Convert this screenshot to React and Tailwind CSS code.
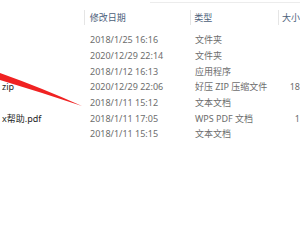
import React from 'react';

const rows = [
  { name: '', date: '2018/1/25 16:16', type: '文件夹', size: '' },
  { name: '', date: '2020/12/29 22:14', type: '文件夹', size: '' },
  { name: '', date: '2018/1/12 16:13', type: '应用程序', size: '' },
  { name: 'zip', date: '2020/12/29 22:06', type: '好压 ZIP 压缩文件', size: '18' },
  { name: '', date: '2018/1/11 15:12', type: '文本文档', size: '' },
  { name: 'x帮助.pdf', date: '2018/1/11 17:05', type: 'WPS PDF 文档', size: '1' },
  { name: '', date: '2018/1/11 15:15', type: '文本文档', size: '' },
];

function Sep() {
  return <div className="w-px self-stretch my-[7px] bg-[#e5e5e5]" />;
}

export default function App() {
  return (
    <div
      className="relative w-[300px] h-[240px] overflow-hidden bg-white text-[9px] leading-none"
      style={{ fontFamily: '"Noto Sans", "Noto Sans CJK SC", sans-serif' }}
    >
      <div className="h-px mt-[2px] ml-[150px] bg-[#ececec]" />

      {/* header */}
      <div className="flex h-[29px] text-[#4c607a]">
        <div className="w-[84px] shrink-0" />
        <Sep />
        <div className="w-[105px] shrink-0 pl-[5px] flex items-center">修改日期</div>
        <Sep />
        <div className="w-[88px] shrink-0 pl-[4px] flex items-center">类型</div>
        <Sep />
        <div className="shrink-0 pl-[3px] flex items-center whitespace-nowrap">大小</div>
      </div>

      {/* rows */}
      <div className="flex flex-col">
        {rows.map((r, i) => (
          <div key={i} className="flex h-[15.67px] items-center whitespace-nowrap">
            <div className="w-[85px] shrink-0 pl-[2px] text-[#1e1e1e]">{r.name}</div>
            <div className="w-[106px] shrink-0 pl-[5px] text-[#6d6d6d]">{r.date}</div>
            <div className="w-[89px] shrink-0 pl-[4px] text-[#6d6d6d]">{r.type}</div>
            <div className="w-[20px] shrink-0 text-right text-[#6d6d6d]">{r.size}</div>
          </div>
        ))}
      </div>

      {/* red annotation arrow */}
      <svg className="absolute left-0 top-0" width="300" height="240" viewBox="0 0 300 240">
        <path d="M0 73 L0 80 Q40 92 82 106 Q42 88 0 73 Z" fill="#f02222" />
      </svg>
    </div>
  );
}
